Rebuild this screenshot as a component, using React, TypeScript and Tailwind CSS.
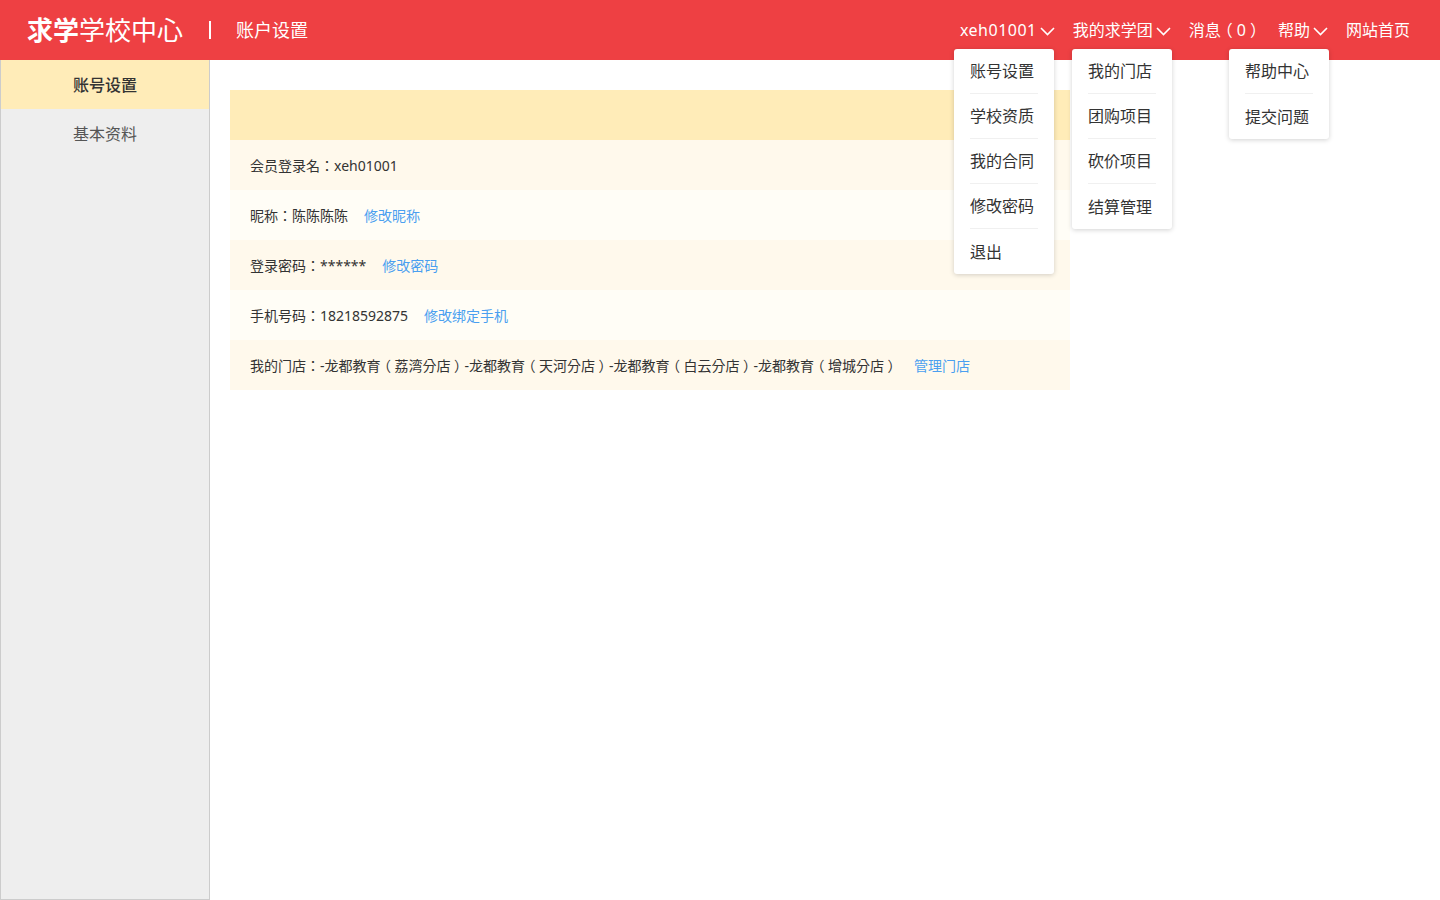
import React from "react";

const Chevron = () => (
  <svg width="15" height="9" viewBox="0 0 15 9" fill="none" className="ml-[3px] mt-[2px] shrink-0">
    <polyline points="1,1 7.5,7.5 14,1" stroke="white" strokeWidth="1.6" />
  </svg>
);

// Centre full-width parentheses inside their em box, as the reference font does:
// half-width glyph (halt feature) with a quarter-em of padding on each side.
const P = ({ text }: { text: string }) => {
  const parts = text.split(/([（）])/);
  return (
    <>
      {parts.map((p, i) =>
        p === "（" || p === "）" ? (
          <span key={i} className="[font-feature-settings:'halt'] px-[0.25em]">
            {p}
          </span>
        ) : (
          <React.Fragment key={i}>{p}</React.Fragment>
        )
      )}
    </>
  );
};

const Dropdown = ({ items, left }: { items: string[]; left: string }) => (
  <div
    className={`absolute top-[49px] ${left} w-[100px] bg-white rounded-[3px] shadow-[0_1px_5px_rgba(0,0,0,0.18)] z-10`}
  >
    {items.map((it, i) => (
      <div key={it} className="px-[16px]">
        <div
          className={`h-[45px] flex items-center text-[16px] text-[#333] ${
            i < items.length - 1 ? "border-b border-[#f0f0f0]" : ""
          }`}
        >
          <span>{it}</span>
        </div>
      </div>
    ))}
  </div>
);

export default function App() {
  const font = "font-['Noto_Sans','Noto_Sans_CJK_KR',sans-serif]";
  const rows: { label: string; link?: string; bg: string }[] = [
    { label: "会员登录名：xeh01001", bg: "bg-[#fff9ec]" },
    { label: "昵称：陈陈陈陈", link: "修改昵称", bg: "bg-[#fffdf6]" },
    { label: "登录密码：******", link: "修改密码", bg: "bg-[#fff9ec]" },
    { label: "手机号码：18218592875", link: "修改绑定手机", bg: "bg-[#fffdf6]" },
    {
      label:
        "我的门店：-龙都教育（荔湾分店）-龙都教育（天河分店）-龙都教育（白云分店）-龙都教育（增城分店）",
      link: "管理门店",
      bg: "bg-[#fff9ec]",
    },
  ];
  return (
    <div className={`relative w-[1440px] h-[900px] bg-white whitespace-nowrap ${font}`}>
      {/* Header */}
      <div className="h-[60px] bg-[#ee4043] flex items-center text-white">
        <div className="pl-[27px] text-[26px] leading-none flex items-center">
          <span className="font-bold">求学</span>
          <span>学校中心</span>
        </div>
        <div className="ml-[26px] w-[2px] h-[18px] bg-white" />
        <div className="ml-[25px] text-[18px]">账户设置</div>
        <div className="ml-auto pr-[30px] flex items-center text-[16px]">
          <div className="flex items-center shrink-0">
            <span className="tracking-[0.5px]">xeh01001</span>
            <Chevron />
          </div>
          <div className="flex items-center ml-[18px] shrink-0">
            我的求学团
            <Chevron />
          </div>
          <div className="ml-[18px] shrink-0">
            <P text="消息（0）" />
          </div>
          <div className="flex items-center ml-[16px] shrink-0">
            帮助
            <Chevron />
          </div>
          <div className="ml-[18px] shrink-0">网站首页</div>
        </div>
      </div>

      {/* Body */}
      <div className="flex h-[840px]">
        <div className="w-[210px] h-full bg-[#eeeeee] border-l border-r border-b border-[#cccccc]">
          <div className="h-[49px] bg-[#ffecb8] flex items-center justify-center text-[16px] text-[#333] font-medium">
            账号设置
          </div>
          <div className="h-[49px] flex items-center justify-center text-[16px] text-[#555]">
            基本资料
          </div>
        </div>
        <div className="ml-[20px] mt-[30px] w-[840px]">
          <div className="h-[50px] bg-[#ffecb8]" />
          {rows.map((r) => (
            <div
              key={r.label}
              className={`h-[50px] ${r.bg} flex items-center pl-[20px] text-[14px] text-[#333]`}
            >
              <span className="shrink-0">
                <P text={r.label} />
              </span>
              {r.link && <span className="ml-[16px] shrink-0 text-[#4a9ff0]">{r.link}</span>}
            </div>
          ))}
        </div>
      </div>

      <Dropdown left="left-[954px]" items={["账号设置", "学校资质", "我的合同", "修改密码", "退出"]} />
      <Dropdown left="left-[1072px]" items={["我的门店", "团购项目", "砍价项目", "结算管理"]} />
      <Dropdown left="left-[1229px]" items={["帮助中心", "提交问题"]} />
    </div>
  );
}
